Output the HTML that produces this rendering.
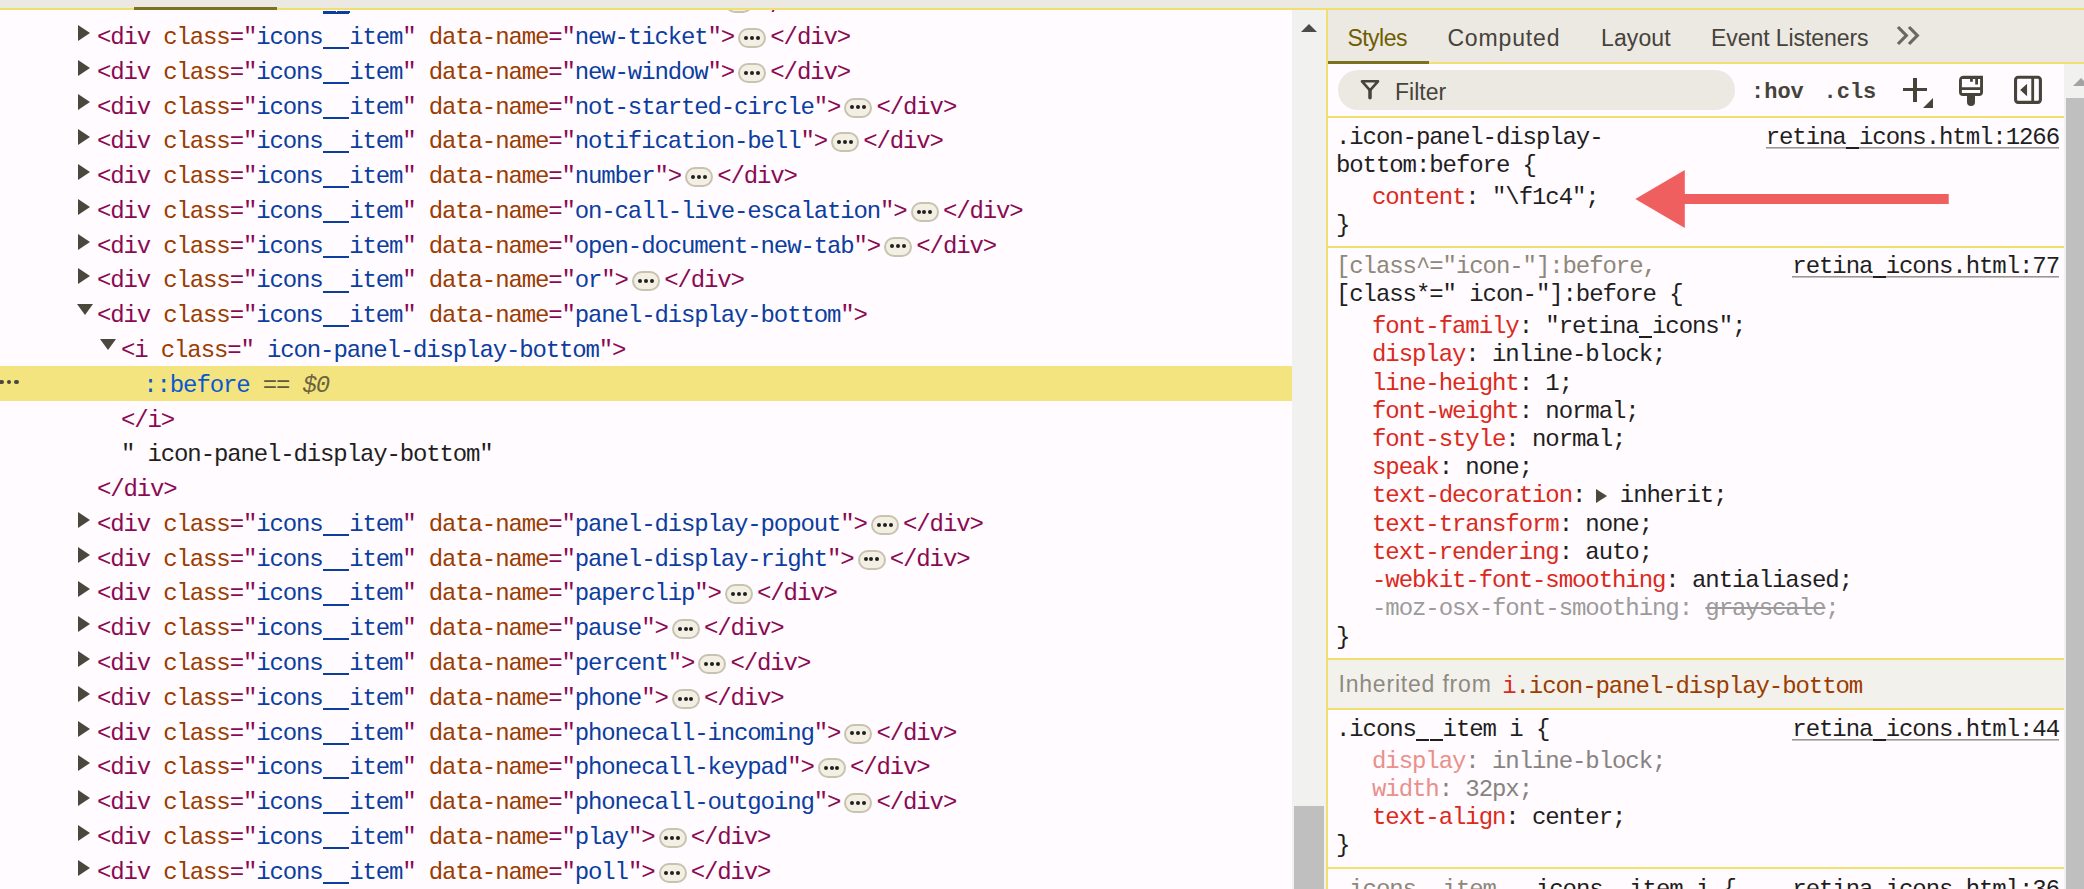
<!DOCTYPE html>
<html><head><meta charset="utf-8"><style>
*{margin:0;padding:0;box-sizing:border-box}
html,body{width:2084px;height:889px;overflow:hidden;background:#fffbfe}
body{position:relative}
#el{position:absolute;left:0;top:10px;width:1292px;height:879px;overflow:hidden}
#el > *{margin-top:-10px}
.m{position:absolute;white-space:pre;font-family:"Liberation Mono", monospace;font-size:24px;line-height:30px;letter-spacing:-1.13px;color:#1f1f1f}
.t{color:#8a0a52} .a{color:#9b3c00} .v{color:#0b3e9f} .k{color:#1f1f1f}
.pb{color:#0b57d0} .eq{color:#5f5a3c} .d0{color:#6b6540;font-style:italic}
.pn{color:#da2a1c} .pv{color:#1f1f1f} .pnd{color:#e8908a} .vd{color:#868381} .sg{color:#8e887a} .mg{color:#9b9b9b}
.lk{background:linear-gradient(#9a978f,#9a978f) no-repeat 0 23.7px / 100% 1.6px}
.tr{position:absolute;width:0;height:0;border-top:8.1px solid transparent;border-bottom:8.1px solid transparent;border-left:12.2px solid #4a473d}
.td{position:absolute;width:0;height:0;border-left:8px solid transparent;border-right:8px solid transparent;border-top:11.8px solid #4a473d}
.ell{display:inline-block;position:relative;width:28px;height:20px;margin:0 4.2px 0 4.1px;vertical-align:-4px;background:#f3efe2;border:2px solid #c8c2b0;border-radius:10px;letter-spacing:0}
.ell i{position:absolute;top:5.8px;width:4px;height:4px;border-radius:2px;background:#1f1f1f}
.ell i:nth-child(1){left:3.9px} .ell i:nth-child(2){left:9.8px} .ell i:nth-child(3){left:15.7px}
.dots{position:absolute;width:20px;height:6px}
.dots i{position:absolute;top:0;width:4.6px;height:4.6px;border-radius:50%;background:#4a473d}
.dots i:nth-child(1){left:-1px} .dots i:nth-child(2){left:6.5px} .dots i:nth-child(3){left:14px}
.tab{position:absolute;top:21px;font-family:"Liberation Sans", sans-serif;font-size:23px;line-height:34px;white-space:pre}
.hov{position:absolute;top:75.5px;font-family:"Liberation Mono", monospace;font-weight:bold;font-size:22px;line-height:34px;color:#46433a;white-space:pre}
.inh{position:absolute;font-family:"Liberation Sans", sans-serif;font-size:23px;line-height:30px;color:#8d8a82;white-space:pre}
.u{color:transparent;background-repeat:no-repeat;background-position:0.3px 23.1px;background-size:13.1px 2px}
.stri{display:inline-block;width:0;height:0;border-top:7.5px solid transparent;border-bottom:7.5px solid transparent;border-left:11.5px solid #4a473d;margin-left:-2.3px;margin-right:-0.9px;vertical-align:-1px}
</style></head><body>
<div id="el">
<div style="position:absolute;left:0;top:366px;width:1292px;height:35px;background:#f3e480"></div>
<div class="dots" style="left:0px;top:379.5px"><i></i><i></i><i></i></div>
<div class="tr" style="left:78.3px;top:-9.88px"></div>
<div class="m" style="left:96.90px;top:-11.78px;"><span class="t">&lt;div</span> <span class="a">class</span><span class="t">=&quot;</span><span class="v">icons<span class="u" style="background-image:linear-gradient(#0b3e9f,#0b3e9f)">_</span><span class="u" style="background-image:linear-gradient(#0b3e9f,#0b3e9f)">_</span>item</span><span class="t">&quot;</span> <span class="a">data-name</span><span class="t">=&quot;</span><span class="v">new-sheet</span><span class="t">&quot;&gt;</span><span class="ell"><i></i><i></i><i></i></span><span class="t">&lt;/div&gt;</span></div>
<div class="tr" style="left:78.3px;top:24.90px"></div>
<div class="m" style="left:96.90px;top:23.00px;"><span class="t">&lt;div</span> <span class="a">class</span><span class="t">=&quot;</span><span class="v">icons<span class="u" style="background-image:linear-gradient(#0b3e9f,#0b3e9f)">_</span><span class="u" style="background-image:linear-gradient(#0b3e9f,#0b3e9f)">_</span>item</span><span class="t">&quot;</span> <span class="a">data-name</span><span class="t">=&quot;</span><span class="v">new-ticket</span><span class="t">&quot;&gt;</span><span class="ell"><i></i><i></i><i></i></span><span class="t">&lt;/div&gt;</span></div>
<div class="tr" style="left:78.3px;top:59.68px"></div>
<div class="m" style="left:96.90px;top:57.78px;"><span class="t">&lt;div</span> <span class="a">class</span><span class="t">=&quot;</span><span class="v">icons<span class="u" style="background-image:linear-gradient(#0b3e9f,#0b3e9f)">_</span><span class="u" style="background-image:linear-gradient(#0b3e9f,#0b3e9f)">_</span>item</span><span class="t">&quot;</span> <span class="a">data-name</span><span class="t">=&quot;</span><span class="v">new-window</span><span class="t">&quot;&gt;</span><span class="ell"><i></i><i></i><i></i></span><span class="t">&lt;/div&gt;</span></div>
<div class="tr" style="left:78.3px;top:94.46px"></div>
<div class="m" style="left:96.90px;top:92.56px;"><span class="t">&lt;div</span> <span class="a">class</span><span class="t">=&quot;</span><span class="v">icons<span class="u" style="background-image:linear-gradient(#0b3e9f,#0b3e9f)">_</span><span class="u" style="background-image:linear-gradient(#0b3e9f,#0b3e9f)">_</span>item</span><span class="t">&quot;</span> <span class="a">data-name</span><span class="t">=&quot;</span><span class="v">not-started-circle</span><span class="t">&quot;&gt;</span><span class="ell"><i></i><i></i><i></i></span><span class="t">&lt;/div&gt;</span></div>
<div class="tr" style="left:78.3px;top:129.24px"></div>
<div class="m" style="left:96.90px;top:127.34px;"><span class="t">&lt;div</span> <span class="a">class</span><span class="t">=&quot;</span><span class="v">icons<span class="u" style="background-image:linear-gradient(#0b3e9f,#0b3e9f)">_</span><span class="u" style="background-image:linear-gradient(#0b3e9f,#0b3e9f)">_</span>item</span><span class="t">&quot;</span> <span class="a">data-name</span><span class="t">=&quot;</span><span class="v">notification-bell</span><span class="t">&quot;&gt;</span><span class="ell"><i></i><i></i><i></i></span><span class="t">&lt;/div&gt;</span></div>
<div class="tr" style="left:78.3px;top:164.02px"></div>
<div class="m" style="left:96.90px;top:162.12px;"><span class="t">&lt;div</span> <span class="a">class</span><span class="t">=&quot;</span><span class="v">icons<span class="u" style="background-image:linear-gradient(#0b3e9f,#0b3e9f)">_</span><span class="u" style="background-image:linear-gradient(#0b3e9f,#0b3e9f)">_</span>item</span><span class="t">&quot;</span> <span class="a">data-name</span><span class="t">=&quot;</span><span class="v">number</span><span class="t">&quot;&gt;</span><span class="ell"><i></i><i></i><i></i></span><span class="t">&lt;/div&gt;</span></div>
<div class="tr" style="left:78.3px;top:198.80px"></div>
<div class="m" style="left:96.90px;top:196.90px;"><span class="t">&lt;div</span> <span class="a">class</span><span class="t">=&quot;</span><span class="v">icons<span class="u" style="background-image:linear-gradient(#0b3e9f,#0b3e9f)">_</span><span class="u" style="background-image:linear-gradient(#0b3e9f,#0b3e9f)">_</span>item</span><span class="t">&quot;</span> <span class="a">data-name</span><span class="t">=&quot;</span><span class="v">on-call-live-escalation</span><span class="t">&quot;&gt;</span><span class="ell"><i></i><i></i><i></i></span><span class="t">&lt;/div&gt;</span></div>
<div class="tr" style="left:78.3px;top:233.58px"></div>
<div class="m" style="left:96.90px;top:231.68px;"><span class="t">&lt;div</span> <span class="a">class</span><span class="t">=&quot;</span><span class="v">icons<span class="u" style="background-image:linear-gradient(#0b3e9f,#0b3e9f)">_</span><span class="u" style="background-image:linear-gradient(#0b3e9f,#0b3e9f)">_</span>item</span><span class="t">&quot;</span> <span class="a">data-name</span><span class="t">=&quot;</span><span class="v">open-document-new-tab</span><span class="t">&quot;&gt;</span><span class="ell"><i></i><i></i><i></i></span><span class="t">&lt;/div&gt;</span></div>
<div class="tr" style="left:78.3px;top:268.36px"></div>
<div class="m" style="left:96.90px;top:266.46px;"><span class="t">&lt;div</span> <span class="a">class</span><span class="t">=&quot;</span><span class="v">icons<span class="u" style="background-image:linear-gradient(#0b3e9f,#0b3e9f)">_</span><span class="u" style="background-image:linear-gradient(#0b3e9f,#0b3e9f)">_</span>item</span><span class="t">&quot;</span> <span class="a">data-name</span><span class="t">=&quot;</span><span class="v">or</span><span class="t">&quot;&gt;</span><span class="ell"><i></i><i></i><i></i></span><span class="t">&lt;/div&gt;</span></div>
<div class="td" style="left:76.5px;top:303.94px"></div>
<div class="m" style="left:96.90px;top:301.24px;"><span class="t">&lt;div</span> <span class="a">class</span><span class="t">=&quot;</span><span class="v">icons<span class="u" style="background-image:linear-gradient(#0b3e9f,#0b3e9f)">_</span><span class="u" style="background-image:linear-gradient(#0b3e9f,#0b3e9f)">_</span>item</span><span class="t">&quot;</span> <span class="a">data-name</span><span class="t">=&quot;</span><span class="v">panel-display-bottom</span><span class="t">&quot;&gt;</span></div>
<div class="td" style="left:100.20px;top:338.72px"></div>
<div class="m" style="left:121.00px;top:336.02px;"><span class="t">&lt;i</span> <span class="a">class</span><span class="t">=&quot;</span><span class="v"> icon-panel-display-bottom</span><span class="t">&quot;&gt;</span></div>
<div class="m" style="left:143.30px;top:370.80px;"><span class="pb">::before</span> <span class="eq">==</span> <span class="d0">$0</span></div>
<div class="m" style="left:121.00px;top:405.58px;"><span class="t">&lt;/i&gt;</span></div>
<div class="m" style="left:121.00px;top:440.36px;"><span class="k">&quot; icon-panel-display-bottom&quot;</span></div>
<div class="m" style="left:96.90px;top:475.14px;"><span class="t">&lt;/div&gt;</span></div>
<div class="tr" style="left:78.3px;top:511.82px"></div>
<div class="m" style="left:96.90px;top:509.92px;"><span class="t">&lt;div</span> <span class="a">class</span><span class="t">=&quot;</span><span class="v">icons<span class="u" style="background-image:linear-gradient(#0b3e9f,#0b3e9f)">_</span><span class="u" style="background-image:linear-gradient(#0b3e9f,#0b3e9f)">_</span>item</span><span class="t">&quot;</span> <span class="a">data-name</span><span class="t">=&quot;</span><span class="v">panel-display-popout</span><span class="t">&quot;&gt;</span><span class="ell"><i></i><i></i><i></i></span><span class="t">&lt;/div&gt;</span></div>
<div class="tr" style="left:78.3px;top:546.60px"></div>
<div class="m" style="left:96.90px;top:544.70px;"><span class="t">&lt;div</span> <span class="a">class</span><span class="t">=&quot;</span><span class="v">icons<span class="u" style="background-image:linear-gradient(#0b3e9f,#0b3e9f)">_</span><span class="u" style="background-image:linear-gradient(#0b3e9f,#0b3e9f)">_</span>item</span><span class="t">&quot;</span> <span class="a">data-name</span><span class="t">=&quot;</span><span class="v">panel-display-right</span><span class="t">&quot;&gt;</span><span class="ell"><i></i><i></i><i></i></span><span class="t">&lt;/div&gt;</span></div>
<div class="tr" style="left:78.3px;top:581.38px"></div>
<div class="m" style="left:96.90px;top:579.48px;"><span class="t">&lt;div</span> <span class="a">class</span><span class="t">=&quot;</span><span class="v">icons<span class="u" style="background-image:linear-gradient(#0b3e9f,#0b3e9f)">_</span><span class="u" style="background-image:linear-gradient(#0b3e9f,#0b3e9f)">_</span>item</span><span class="t">&quot;</span> <span class="a">data-name</span><span class="t">=&quot;</span><span class="v">paperclip</span><span class="t">&quot;&gt;</span><span class="ell"><i></i><i></i><i></i></span><span class="t">&lt;/div&gt;</span></div>
<div class="tr" style="left:78.3px;top:616.16px"></div>
<div class="m" style="left:96.90px;top:614.26px;"><span class="t">&lt;div</span> <span class="a">class</span><span class="t">=&quot;</span><span class="v">icons<span class="u" style="background-image:linear-gradient(#0b3e9f,#0b3e9f)">_</span><span class="u" style="background-image:linear-gradient(#0b3e9f,#0b3e9f)">_</span>item</span><span class="t">&quot;</span> <span class="a">data-name</span><span class="t">=&quot;</span><span class="v">pause</span><span class="t">&quot;&gt;</span><span class="ell"><i></i><i></i><i></i></span><span class="t">&lt;/div&gt;</span></div>
<div class="tr" style="left:78.3px;top:650.94px"></div>
<div class="m" style="left:96.90px;top:649.04px;"><span class="t">&lt;div</span> <span class="a">class</span><span class="t">=&quot;</span><span class="v">icons<span class="u" style="background-image:linear-gradient(#0b3e9f,#0b3e9f)">_</span><span class="u" style="background-image:linear-gradient(#0b3e9f,#0b3e9f)">_</span>item</span><span class="t">&quot;</span> <span class="a">data-name</span><span class="t">=&quot;</span><span class="v">percent</span><span class="t">&quot;&gt;</span><span class="ell"><i></i><i></i><i></i></span><span class="t">&lt;/div&gt;</span></div>
<div class="tr" style="left:78.3px;top:685.72px"></div>
<div class="m" style="left:96.90px;top:683.82px;"><span class="t">&lt;div</span> <span class="a">class</span><span class="t">=&quot;</span><span class="v">icons<span class="u" style="background-image:linear-gradient(#0b3e9f,#0b3e9f)">_</span><span class="u" style="background-image:linear-gradient(#0b3e9f,#0b3e9f)">_</span>item</span><span class="t">&quot;</span> <span class="a">data-name</span><span class="t">=&quot;</span><span class="v">phone</span><span class="t">&quot;&gt;</span><span class="ell"><i></i><i></i><i></i></span><span class="t">&lt;/div&gt;</span></div>
<div class="tr" style="left:78.3px;top:720.50px"></div>
<div class="m" style="left:96.90px;top:718.60px;"><span class="t">&lt;div</span> <span class="a">class</span><span class="t">=&quot;</span><span class="v">icons<span class="u" style="background-image:linear-gradient(#0b3e9f,#0b3e9f)">_</span><span class="u" style="background-image:linear-gradient(#0b3e9f,#0b3e9f)">_</span>item</span><span class="t">&quot;</span> <span class="a">data-name</span><span class="t">=&quot;</span><span class="v">phonecall-incoming</span><span class="t">&quot;&gt;</span><span class="ell"><i></i><i></i><i></i></span><span class="t">&lt;/div&gt;</span></div>
<div class="tr" style="left:78.3px;top:755.28px"></div>
<div class="m" style="left:96.90px;top:753.38px;"><span class="t">&lt;div</span> <span class="a">class</span><span class="t">=&quot;</span><span class="v">icons<span class="u" style="background-image:linear-gradient(#0b3e9f,#0b3e9f)">_</span><span class="u" style="background-image:linear-gradient(#0b3e9f,#0b3e9f)">_</span>item</span><span class="t">&quot;</span> <span class="a">data-name</span><span class="t">=&quot;</span><span class="v">phonecall-keypad</span><span class="t">&quot;&gt;</span><span class="ell"><i></i><i></i><i></i></span><span class="t">&lt;/div&gt;</span></div>
<div class="tr" style="left:78.3px;top:790.06px"></div>
<div class="m" style="left:96.90px;top:788.16px;"><span class="t">&lt;div</span> <span class="a">class</span><span class="t">=&quot;</span><span class="v">icons<span class="u" style="background-image:linear-gradient(#0b3e9f,#0b3e9f)">_</span><span class="u" style="background-image:linear-gradient(#0b3e9f,#0b3e9f)">_</span>item</span><span class="t">&quot;</span> <span class="a">data-name</span><span class="t">=&quot;</span><span class="v">phonecall-outgoing</span><span class="t">&quot;&gt;</span><span class="ell"><i></i><i></i><i></i></span><span class="t">&lt;/div&gt;</span></div>
<div class="tr" style="left:78.3px;top:824.84px"></div>
<div class="m" style="left:96.90px;top:822.94px;"><span class="t">&lt;div</span> <span class="a">class</span><span class="t">=&quot;</span><span class="v">icons<span class="u" style="background-image:linear-gradient(#0b3e9f,#0b3e9f)">_</span><span class="u" style="background-image:linear-gradient(#0b3e9f,#0b3e9f)">_</span>item</span><span class="t">&quot;</span> <span class="a">data-name</span><span class="t">=&quot;</span><span class="v">play</span><span class="t">&quot;&gt;</span><span class="ell"><i></i><i></i><i></i></span><span class="t">&lt;/div&gt;</span></div>
<div class="tr" style="left:78.3px;top:859.62px"></div>
<div class="m" style="left:96.90px;top:857.72px;"><span class="t">&lt;div</span> <span class="a">class</span><span class="t">=&quot;</span><span class="v">icons<span class="u" style="background-image:linear-gradient(#0b3e9f,#0b3e9f)">_</span><span class="u" style="background-image:linear-gradient(#0b3e9f,#0b3e9f)">_</span>item</span><span class="t">&quot;</span> <span class="a">data-name</span><span class="t">=&quot;</span><span class="v">poll</span><span class="t">&quot;&gt;</span><span class="ell"><i></i><i></i><i></i></span><span class="t">&lt;/div&gt;</span></div>
</div>
<div style="position:absolute;left:322.8px;top:11px;width:13px;height:2.4px;background:#0b3e9f"></div><div style="position:absolute;left:336.6px;top:11px;width:13px;height:2.4px;background:#0b3e9f"></div>
<div style="position:absolute;left:772px;top:10px;width:2.4px;height:2.2px;background:#8a0a52;transform:skewX(-25deg)"></div>
<div style="position:absolute;left:0;top:0;width:2084px;height:8px;background:#ece8e2"></div>
<div style="position:absolute;left:0;top:8px;width:2084px;height:2px;background:#f1df72"></div>
<div style="position:absolute;left:134px;top:7px;width:143px;height:3px;background:#7c7120"></div>
<div style="position:absolute;left:1292px;top:10px;width:34px;height:879px;background:#f1f1f0"></div>
<div style="position:absolute;left:1301px;top:23.7px;width:0;height:0;border-left:8.2px solid transparent;border-right:8.2px solid transparent;border-bottom:8.5px solid #4b4b4b"></div>
<div style="position:absolute;left:1294px;top:806px;width:30px;height:83px;background:#bfbfbf"></div>
<div style="position:absolute;left:1326px;top:10px;width:2px;height:879px;background:#f1df72"></div>
<div style="position:absolute;left:1328px;top:10px;width:756px;height:52px;background:#ece8e2"></div>
<div style="position:absolute;left:1328px;top:62px;width:756px;height:2px;background:#f1df72"></div>
<div style="position:absolute;left:1328px;top:61px;width:101px;height:3px;background:#7c7120"></div>
<div class="tab" style="left:1347.4px;color:#6e5e00;letter-spacing:-0.5px">Styles</div>
<div class="tab" style="left:1447.4px;color:#45433b;letter-spacing:0.85px">Computed</div>
<div class="tab" style="left:1601.0px;color:#45433b;letter-spacing:0.1px">Layout</div>
<div class="tab" style="left:1711.0px;color:#45433b;letter-spacing:-0.07px">Event Listeners</div>
<svg style="position:absolute;left:1895px;top:24px" width="30" height="24" viewBox="0 0 30 24"><path d="M3 3 L11.3 11.5 L3 20 M14 3 L22.3 11.5 L14 20" fill="none" stroke="#6b6860" stroke-width="3.2"/></svg>
<div style="position:absolute;left:1338px;top:70px;width:397px;height:40px;border-radius:20px;background:#ece9e2"></div>
<svg style="position:absolute;left:1355px;top:76px" width="30" height="28" viewBox="0 0 30 28"><path d="M7 5.3 H23 L15 14.4 Z" fill="none" stroke="#46433a" stroke-width="2.6" stroke-linejoin="round"/><path d="M15 14 V21.8" stroke="#46433a" stroke-width="3.5" stroke-linecap="round"/></svg>
<div class="tab" style="left:1395px;top:75px;color:#46433a">Filter</div>
<div class="hov" style="left:1751px">:hov</div>
<div class="hov" style="left:1823.5px">.cls</div>
<div style="position:absolute;left:1913.3px;top:78px;width:3.4px;height:24px;background:#46433a"></div>
<div style="position:absolute;left:1903px;top:88.2px;width:24px;height:3.2px;background:#46433a"></div>
<div style="position:absolute;left:1923px;top:98px;width:0;height:0;border-left:10px solid transparent;border-bottom:10px solid #46433a"></div>
<svg style="position:absolute;left:1958px;top:75px" width="26" height="32" viewBox="0 0 26 32"><path d="M6 0.8 H25 V17 Q25 21 21 21 H5 Q1 21 1 17 V5.8 Q1 0.8 6 0.8 Z M3.9 4 V12.2 H22.1 V4 H20 V9.6 H17.2 V4 H14.85 V6.8 H12.06 V4 Z M3.9 15 V18 H22.1 V15 Z" fill="#46433a" fill-rule="evenodd"/><path d="M9 21 H17 V27 Q17 31 13 31 Q9 31 9 27 Z" fill="#46433a"/></svg>
<svg style="position:absolute;left:2013px;top:75px" width="30" height="30" viewBox="0 0 30 30"><rect x="2.55" y="2.3" width="24.85" height="25.1" rx="2.6" fill="none" stroke="#46433a" stroke-width="3.1"/><rect x="18.3" y="2" width="2.8" height="26" fill="#46433a"/><path d="M7.2 15 L14.06 8.7 V21.25 Z" fill="#46433a"/></svg>
<div style="position:absolute;left:1328px;top:116px;width:736px;height:2px;background:#f1df72"></div>
<div style="position:absolute;left:2064px;top:64px;width:20px;height:825px;background:#f1f1f0"></div>
<div style="position:absolute;left:2072.5px;top:78px;width:0;height:0;border-left:8.5px solid transparent;border-right:8.5px solid transparent;border-bottom:8px solid #a3a3a3"></div>
<div style="position:absolute;left:2066px;top:98px;width:18px;height:791px;background:#bfbfbf"></div>
<div class="m" style="left:1335.90px;top:123.00px;letter-spacing:-1.07px"><span class="pv">.icon-panel-display-</span></div>
<div class="m" style="left:1335.90px;top:150.50px;letter-spacing:-1.07px"><span class="pv">bottom:before {</span></div>
<div class="m" style="left:1372.00px;top:182.90px;letter-spacing:-1.07px"><span class="pn">content</span><span class="pv">: </span><span class="pv">&quot;\f1c4&quot;;</span></div>
<div class="m" style="left:1335.90px;top:211.20px;letter-spacing:-1.07px"><span class="pv">}</span></div>
<div class="m lk" style="letter-spacing:-1.07px;right:25.0px;top:123.00px">retina<span class="u" style="background-image:linear-gradient(#1f1f1f,#1f1f1f)">_</span>icons.html:1266</div>
<div style="position:absolute;left:1328px;top:246px;width:736px;height:2px;background:#f1df72"></div>
<svg style="position:absolute;left:1630px;top:165px" width="325" height="70" viewBox="0 0 325 70"><path d="M5.3 33.9 L54.8 5.1 V29 H318.7 V39.1 H54.8 V63 Z" fill="#f05f5f"/></svg>
<div class="m" style="left:1335.90px;top:251.90px;letter-spacing:-1.07px"><span class="sg">[class^=&quot;icon-&quot;]:before,</span></div>
<div class="m" style="left:1335.90px;top:280.10px;letter-spacing:-1.07px"><span class="pv">[class*=&quot; icon-&quot;]:before {</span></div>
<div class="m lk" style="letter-spacing:-1.07px;right:25.0px;top:252.20px">retina<span class="u" style="background-image:linear-gradient(#1f1f1f,#1f1f1f)">_</span>icons.html:77</div>
<div class="m" style="left:1372.00px;top:312.10px;letter-spacing:-1.07px"><span class="pn">font-family</span><span class="pv">: </span><span class="pv">&quot;retina<span class="u" style="background-image:linear-gradient(#1f1f1f,#1f1f1f)">_</span>icons&quot;;</span></div>
<div class="m" style="left:1372.00px;top:340.32px;letter-spacing:-1.07px"><span class="pn">display</span><span class="pv">: </span><span class="pv">inline-block;</span></div>
<div class="m" style="left:1372.00px;top:368.54px;letter-spacing:-1.07px"><span class="pn">line-height</span><span class="pv">: </span><span class="pv">1;</span></div>
<div class="m" style="left:1372.00px;top:396.76px;letter-spacing:-1.07px"><span class="pn">font-weight</span><span class="pv">: </span><span class="pv">normal;</span></div>
<div class="m" style="left:1372.00px;top:424.98px;letter-spacing:-1.07px"><span class="pn">font-style</span><span class="pv">: </span><span class="pv">normal;</span></div>
<div class="m" style="left:1372.00px;top:453.20px;letter-spacing:-1.07px"><span class="pn">speak</span><span class="pv">: </span><span class="pv">none;</span></div>
<div class="m" style="left:1372.00px;top:481.42px;letter-spacing:-1.07px"><span class="pn">text-decoration</span><span class="pv">: </span><span class="stri"></span> <span class="pv">inherit;</span></div>
<div class="m" style="left:1372.00px;top:509.64px;letter-spacing:-1.07px"><span class="pn">text-transform</span><span class="pv">: </span><span class="pv">none;</span></div>
<div class="m" style="left:1372.00px;top:537.86px;letter-spacing:-1.07px"><span class="pn">text-rendering</span><span class="pv">: </span><span class="pv">auto;</span></div>
<div class="m" style="left:1372.00px;top:566.08px;letter-spacing:-1.07px"><span class="pn">-webkit-font-smoothing</span><span class="pv">: </span><span class="pv">antialiased;</span></div>
<div class="m" style="left:1372.00px;top:594.30px;letter-spacing:-1.07px"><span class="mg">-moz-osx-font-smoothing</span><span class="mg">: </span><span class="mg" style="text-decoration:line-through;text-decoration-thickness:1.6px">grayscale</span><span class="mg">;</span></div>
<div class="m" style="left:1335.90px;top:622.52px;letter-spacing:-1.07px"><span class="pv">}</span></div>
<div style="position:absolute;left:1328px;top:658px;width:736px;height:2px;background:#f1df72"></div>
<div style="position:absolute;left:1328px;top:660px;width:736px;height:48px;background:#f3f1ec"></div>
<div style="position:absolute;left:1328px;top:708px;width:736px;height:2px;background:#f1df72"></div>
<div class="inh" style="left:1338.5px;top:669px;letter-spacing:0.8px">Inherited from</div>
<div class="m" style="left:1502.20px;top:671.80px;letter-spacing:-1.07px"><span style="color:#d92b1c">i</span><span style="color:#9b3c00">.icon-panel-display-bottom</span></div>
<div class="m" style="left:1335.90px;top:714.80px;letter-spacing:-1.07px"><span class="pv">.icons<span class="u" style="background-image:linear-gradient(#1f1f1f,#1f1f1f)">_</span><span class="u" style="background-image:linear-gradient(#1f1f1f,#1f1f1f)">_</span>item i {</span></div>
<div class="m lk" style="letter-spacing:-1.07px;right:25.0px;top:715.00px">retina<span class="u" style="background-image:linear-gradient(#1f1f1f,#1f1f1f)">_</span>icons.html:44</div>
<div class="m" style="left:1372.00px;top:746.70px;letter-spacing:-1.07px"><span class="pnd">display</span><span class="vd">: inline-block;</span></div>
<div class="m" style="left:1372.00px;top:774.70px;letter-spacing:-1.07px"><span class="pnd">width</span><span class="vd">: 32px;</span></div>
<div class="m" style="left:1372.00px;top:802.50px;letter-spacing:-1.07px"><span class="pn">text-align</span><span class="pv">: </span><span class="pv">center;</span></div>
<div class="m" style="left:1335.90px;top:830.70px;letter-spacing:-1.07px"><span class="pv">}</span></div>
<div style="position:absolute;left:1328px;top:867px;width:736px;height:2px;background:#f1df72"></div>
<div class="m" style="left:1335.90px;top:874.50px;letter-spacing:-1.07px"><span class="sg">.icons<span class="u" style="background-image:linear-gradient(#8e887a,#8e887a)">_</span><span class="u" style="background-image:linear-gradient(#8e887a,#8e887a)">_</span>item, </span><span class="pv">.icons<span class="u" style="background-image:linear-gradient(#1f1f1f,#1f1f1f)">_</span><span class="u" style="background-image:linear-gradient(#1f1f1f,#1f1f1f)">_</span>item i {</span></div>
<div class="m lk" style="letter-spacing:-1.07px;right:25.0px;top:874.60px">retina<span class="u" style="background-image:linear-gradient(#1f1f1f,#1f1f1f)">_</span>icons.html:36</div>
</body></html>
